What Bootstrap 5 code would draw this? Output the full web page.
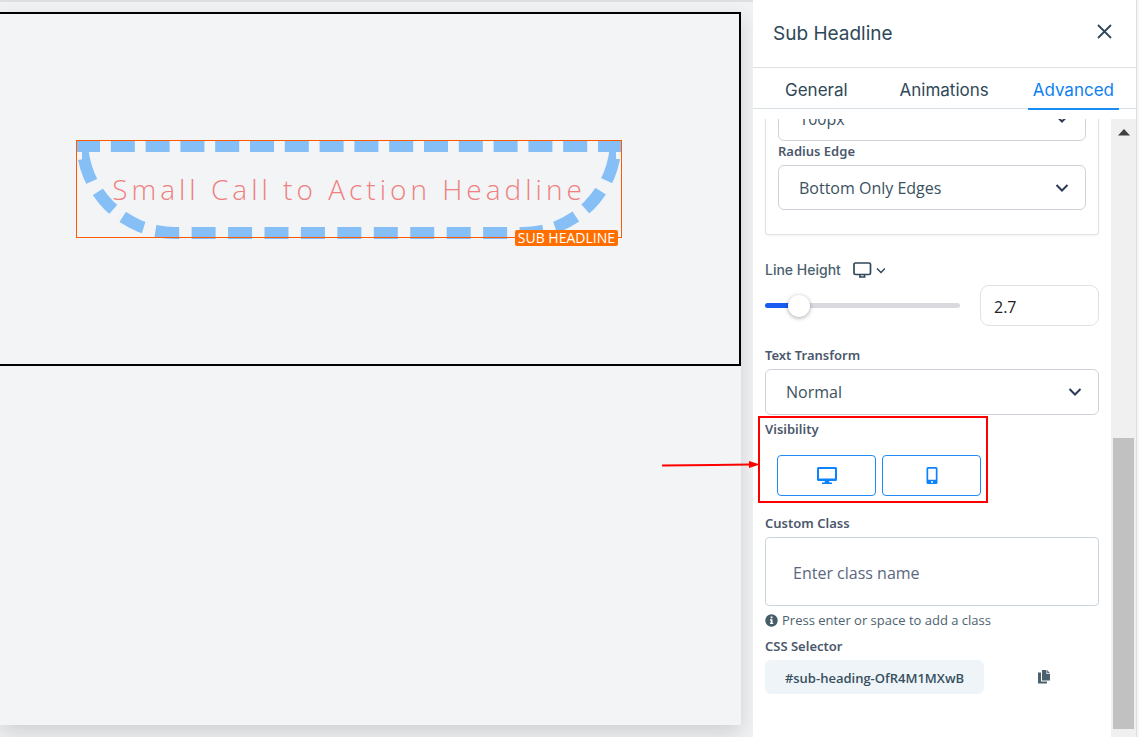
<!DOCTYPE html>
<html lang="en">
<head>
<meta charset="utf-8">
<meta name="viewport" content="width=device-width, initial-scale=1">
<title>Page editor</title>
<link href="https://cdn.jsdelivr.net/npm/bootstrap@5.3.0/dist/css/bootstrap.min.css" rel="stylesheet">
<style>
  body { font-family: "Open Sans", "Noto Sans", sans-serif; background: #f1f2f4; color: #2f4858; }
  svg { display: block; }
  .canvas-area { border-top: 2px solid #dddfe1; padding: 10px 12px 12px 0; min-width: 0; }
  .page-sheet { background: #f3f4f6; box-shadow: 0 8px 20px rgba(0, 0, 0, .14); }
  .page-section { border: 2px solid #000; border-left: 0; padding: 126px 117px 125px 76px; }
  .headline { height: 99px; border: 12px dashed #85bff6; border-radius: 0 0 100px 100px; }
  .headline h2 { font-size: 28px; font-weight: 300; letter-spacing: 4px; line-height: 74px; color: #ee8080; white-space: nowrap; }
  .headline-frame { inset: -12px -12px -11px -12px; border: 1px solid #ff5a00; }
  .headline-tag { right: -8px; bottom: -19px; background: #ff6f00; color: #fff; font-size: 14px; line-height: 16px; padding: 0 3px; border-radius: 2px; white-space: nowrap; }
  .settings { width: 386px; background: #fff; border-right: 2px solid #f5f5f6; }
  .settings-inner { border-right: 1px solid #dcdee0; }
  .settings-head { height: 68px; padding: 0 24px 0 20px; border-bottom: 1px solid #dce0e4; font-family: Inter, sans-serif; }
  .settings-head h1 { font-size: 19px; font-weight: 400; line-height: 24px; color: #2f4858; }
  .close-btn { color: #2f4858; line-height: 0; margin-bottom: 4px; }
  .tabs { height: 41px; padding: 0 17px 0 27px; border-bottom: 1px solid #d9e0e5; font-family: Inter, sans-serif; }
  .tabs .nav-link { padding: 10px 5px 0; height: 42px; font-size: 17px; line-height: 24px; color: #2f4858; border-bottom: 2px solid transparent; }
  .tabs .nav-link.active { color: #0d7ff2; border-color: #1a8cf5; }
  .settings-body { margin-top: 10px; }
  /* Clips the scrolled-off top while letting the callout arrow reach past the left edge. */
  .fields { padding: 0 12px; clip-path: inset(0 0 0 -120px); }
  .group-box { border: 1px solid #dfe2e6; border-top: 0; border-radius: 0 0 4px 4px; padding: 0 12px 24px; box-shadow: 0 1px 2px rgba(0, 0, 0, .05); }
  .group-box .form-select:first-child { margin-top: -23px; }
  .field-label { display: block; font-family: "Noto Sans", sans-serif; font-size: 13px; font-weight: 600; line-height: 20px; color: #4b586c; margin-bottom: 4px; }
  .space-xl { margin-top: 25px; }
  .space-lg { margin-top: 19px; }
  .space-md { margin-top: 17px; }
  .space-sm { margin-top: 6px; }
  .inter-label { font: 500 14px/20px Inter, sans-serif; color: #4b616e; }
  .form-select { height: 46px; padding: 0 40px 0 20px; font-size: 16px; color: #3a5160; border-color: #cfd3da; border-radius: 6px;
    background-image: url("data:image/svg+xml,%3csvg xmlns='http://www.w3.org/2000/svg' viewBox='0 0 14 8'%3e%3cpath fill='none' stroke='%232c3a55' stroke-width='2' d='M1.500 1l5.500 5.500 5.500-5.500'/%3e%3c/svg%3e");
    background-size: 14px 8px; background-position: right 16px center; }
  .group-box .form-select { height: 45px; }
  .slider { appearance: none; height: 22px; background: none; }
  .slider::-webkit-slider-runnable-track { height: 5px; border-radius: 3px; background: linear-gradient(to right, #1a5cf0 18%, #d9d9df 18%); }
  .slider::-webkit-slider-thumb { appearance: none; width: 22px; height: 22px; margin-top: -8px; border-radius: 50%; background: #fff; box-shadow: 0 1px 4px rgba(0, 0, 0, .35); }
  .slider-row { margin-top: 5px; gap: 20px; }
  .num-input { width: 119px; height: 41px; padding: 2px 13px 0; border-color: #dfe1e5; border-radius: 9px; color: #222; }
  .visibility-btns { padding-left: 12px; margin-top: 16px; gap: 6px; }
  .visibility-btns .btn { width: 99px; height: 41px; border: 1px solid #1f8bf5; border-radius: 4px; color: #0d84fb; }
  .callout { top: -3px; left: -7px; width: 230px; height: 87px; border: 2px solid #f00; pointer-events: none; }
  .callout-arrow { top: 41px; right: 226px; pointer-events: none; }
  .class-input { height: 69px; padding: 2px 27px 0; border-color: #cbd5e0; border-radius: 4px; }
  .class-input::placeholder { color: #5b6780; }
  .hint { font-size: 13px; line-height: 20px; margin-top: 4px; gap: 4px; color: #4c6270; }
  .selector-chip { width: 219px; height: 34px; padding-top: 4px; background: #eff4f9; border-radius: 6px; font-size: 13px; font-weight: 600; color: #38505e; }
  .copy-btn { margin-left: 54px; color: #4c616e; }
  .scroll-rail { width: 25px; background: #f0f0f0; padding: 10px 2px 8px; }
  .scroll-thumb { width: 21px; height: 291px; background: #c1c1c1; }
</style>
</head>
<body>
<div class="d-flex min-vh-100">
  <main class="canvas-area flex-grow-1 d-flex flex-column">
    <div class="page-sheet flex-grow-1">
      <section class="page-section">
        <div class="headline position-relative">
          <h2 class="m-0 d-flex justify-content-center">Small Call to Action Headline</h2>
          <div class="headline-frame position-absolute"></div>
          <span class="headline-tag position-absolute">SUB HEADLINE</span>
        </div>
      </section>
    </div>
  </main>

  <aside class="settings flex-shrink-0 d-flex position-relative">
    <div class="settings-inner flex-grow-1 d-flex flex-column">
      <header class="settings-head d-flex align-items-center justify-content-between">
        <h1 class="m-0">Sub Headline</h1>
        <button type="button" class="close-btn btn p-0 border-0" aria-label="Close">
          <svg width="15" height="15" viewBox="0 0 15 15" fill="none" stroke="currentColor" stroke-width="1.800"><path d="M1 1l13 13M14 1L1 14"/></svg>
        </button>
      </header>
      <nav class="tabs nav flex-nowrap justify-content-between">
        <a class="nav-link" href="#general">General</a>
        <a class="nav-link ms-2" href="#animations">Animations</a>
        <a class="nav-link active" href="#advanced" aria-current="page">Advanced</a>
      </nav>
      <div class="settings-body flex-grow-1 d-flex">
        <form class="fields flex-grow-1">
          <div class="group-box">
            <select class="form-select" aria-label="Radius"><option>100px</option></select>
            <label class="field-label" for="edge">Radius Edge</label>
            <select class="form-select" id="edge"><option>Bottom Only Edges</option></select>
          </div>

          <div class="d-flex align-items-center space-xl">
            <label class="inter-label" for="lh">Line Height</label>
            <svg class="ms-2" width="36" height="18" viewBox="0 0 36 18" fill="none" stroke="#2f4858">
              <rect x="5" y="2" width="16.500" height="11.500" rx="1.500" stroke-width="1.700"/>
              <path d="M11 13.500v2.500M15.500 13.500v2.500M10 16h6.500" stroke-width="1.500"/>
              <path d="M28 7.500l4 4 4-4" stroke-width="1.500"/>
            </svg>
          </div>
          <div class="slider-row d-flex align-items-center">
            <input class="slider flex-grow-1 m-0" type="range" id="lh" min="0" max="20" step="0.1" value="2.7">
            <input class="num-input form-control" type="text" value="2.7" aria-label="Line height value">
          </div>

          <label class="field-label space-lg" for="tt">Text Transform</label>
          <select class="form-select" id="tt"><option>Normal</option></select>

          <div class="visibility mt-1">
            <div class="position-relative">
              <span class="field-label" id="vis">Visibility</span>
              <div class="visibility-btns d-flex" role="group" aria-labelledby="vis">
                <button type="button" class="btn p-0 d-flex align-items-center justify-content-center" aria-label="Desktop">
                  <svg width="20" height="18" viewBox="0 0 20 18" fill="currentColor"><path fill-rule="evenodd" d="M1.500 0h17Q20 0 20 1.500v11q0 1.500-1.500 1.500h-17Q0 14 0 12.500v-11Q0 0 1.500 0zM2 2v9.500h16V2z"/><path d="M8 14h4l.5 1.500H15V17H5v-1.500h2.500z"/></svg>
                </button>
                <button type="button" class="btn p-0 d-flex align-items-center justify-content-center" aria-label="Mobile">
                  <svg width="12" height="18" viewBox="0 0 12 18" fill="currentColor"><path fill-rule="evenodd" d="M2 0h8q1.500 0 1.500 1.500v14Q11.500 17 10 17H2Q.5 17 .5 15.500v-14Q.5 0 2 0zM2.200 1.800v11h7.600v-11zM6 14a1 1 0 100 2 1 1 0 000-2z"/></svg>
                </button>
              </div>
              <div class="callout position-absolute">
                <svg class="callout-arrow position-absolute" width="98" height="10" viewBox="0 0 98 10"><path d="M0 6.500l52-.5 36-.5" fill="none" stroke="#f00" stroke-width="1.800"/><path d="M87 2l11 3.500L87 9z" fill="#f00"/></svg>
              </div>
            </div>
          </div>

          <label class="field-label space-md" for="cc">Custom Class</label>
          <input class="class-input form-control" id="cc" type="text" placeholder="Enter class name">
          <div class="hint d-flex align-items-center">
            <svg width="13" height="13" viewBox="0 0 13 13"><circle cx="6.500" cy="6.500" r="6.200" fill="#455d69"/><path d="M5.600 2.500h1.900v1.800H5.600zM5 5.300h2.500v3.500h.7V10H5V8.800h.7V6.500H5z" fill="#fff"/></svg>
            <span>Press enter or space to add a class</span>
          </div>
          <span class="field-label space-sm">CSS Selector</span>
          <div class="d-flex align-items-center">
            <div class="selector-chip d-flex align-items-center justify-content-center">#sub-heading-OfR4M1MXwB</div>
            <button type="button" class="copy-btn btn p-0 border-0" aria-label="Copy selector">
              <svg width="13" height="14" viewBox="0 0 13 14" fill="currentColor"><path d="M4 0h4.500v4H12v6.500H4zM9.200 0L12 3.200H9.200zM0 2.500h3v9h6v2H0z"/></svg>
            </button>
          </div>
        </form>
        <div class="scroll-rail flex-shrink-0 d-flex flex-column justify-content-between align-items-center" aria-hidden="true">
          <svg width="12" height="7" viewBox="0 0 12 7"><path d="M6 0l6 6.500H0z" fill="#404040"/></svg>
          <div class="scroll-thumb"></div>
        </div>
      </div>
    </div>
  </aside>
</div>
<script src="https://cdn.jsdelivr.net/npm/bootstrap@5.3.0/dist/js/bootstrap.bundle.min.js"></script>
</body>
</html>
